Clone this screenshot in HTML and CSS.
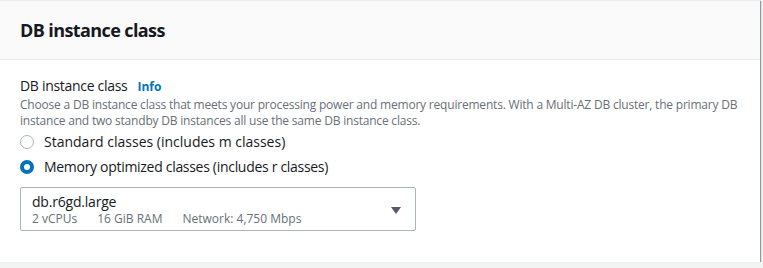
FILE: index.html
```html
<!DOCTYPE html>
<html lang="en">
<head>
    <meta charset="UTF-8">
    <meta name="viewport" content="width=device-width, initial-scale=1.0">
    <title>DB instance class</title>
    <link rel="stylesheet" href="styles.css">
</head>
<body>
    <div class="card">
        <div class="card-header">
            <h2>DB instance class</h2>
        </div>
        <div class="card-body">
            <div class="field-label">
                <span>DB instance class</span>
                <a class="info" href="#">Info</a>
            </div>
            <p class="description">Choose a DB instance class that meets your processing power and memory requirements. With a Multi-AZ DB cluster, the primary DB instance and two standby DB instances all use the same DB instance class.</p>

            <div class="radio-group">
                <label class="radio">
                    <span class="radio-dot"></span>
                    <span>Standard classes (includes m classes)</span>
                </label>
                <label class="radio checked">
                    <span class="radio-dot"></span>
                    <span>Memory optimized classes (includes r classes)</span>
                </label>
            </div>

            <div class="select">
                <div class="select-text">
                    <div class="select-value">db.r6gd.large</div>
                    <div class="select-tags">
                        <span>2 vCPUs</span>
                        <span>16 GiB RAM</span>
                        <span>Network: 4,750 Mbps</span>
                    </div>
                </div>
                <svg class="caret" width="10" height="7" viewBox="0 0 10 7">
                    <path d="M0 0 H10 L5 7 Z" fill="#545b64"/>
                </svg>
            </div>
        </div>
    </div>
</body>
</html>
```

FILE: styles.css
```css
body {
    margin: 0;
    font-family: "Open Sans", Arial, sans-serif;
    background-color: #f2f3f3;
    color: #16191f;
}

.card {
    width: 760px;
    height: 262px;
    background-color: #ffffff;
    border-top: 1px solid #eaeded;
    box-shadow: 1px 1px 1px 0 rgba(0, 28, 36, 0.3), 1px 1px 1px 0 rgba(0, 28, 36, 0.15);
    box-sizing: border-box;
}

.card-header {
    height: 58px;
    padding: 0 20px;
    display: flex;
    align-items: center;
    background-color: #fafafa;
    border-bottom: 1px solid #eaeded;
}

.card-header h2 {
    margin: 0;
    font-size: 18px;
    font-weight: 700;
    line-height: 22px;
    letter-spacing: -0.6px;
}

.card-body {
    padding: 16px 20px 0 20px;
}

.field-label {
    display: flex;
    align-items: baseline;
    font-size: 14px;
    line-height: 20px;
    letter-spacing: -0.3px;
}

.info {
    margin-left: 10px;
    font-size: 12px;
    font-weight: 700;
    letter-spacing: 0;
    color: #0073bb;
    text-decoration: none;
}

.description {
    margin: 0;
    font-size: 12px;
    line-height: 16px;
    letter-spacing: -0.2px;
    color: #687078;
}

.radio-group {
    margin-top: 3px;
    display: flex;
    flex-direction: column;
    gap: 5px;
}

.radio {
    display: flex;
    align-items: center;
    font-size: 14px;
    line-height: 20px;
}

.radio.checked {
    letter-spacing: -0.3px;
}

.radio-dot {
    width: 12px;
    height: 12px;
    margin-right: 10px;
    border: 1px solid #aab7b8;
    border-radius: 50%;
    background-color: #ffffff;
    box-sizing: content-box;
}

.radio.checked .radio-dot {
    width: 6px;
    height: 6px;
    border: 4px solid #0073bb;
}

.select {
    width: 396px;
    margin-top: 10px;
    padding: 5px 14px 3px 11px;
    display: flex;
    align-items: center;
    justify-content: space-between;
    border: 1px solid #aab7b8;
    border-radius: 2px;
    box-sizing: border-box;
}

.select-value {
    font-size: 14px;
    line-height: 18px;
    letter-spacing: -0.2px;
}

.select-tags {
    display: flex;
    gap: 20px;
    font-size: 12px;
    line-height: 16px;
    color: #687078;
}

.caret {
    display: block;
}
```
